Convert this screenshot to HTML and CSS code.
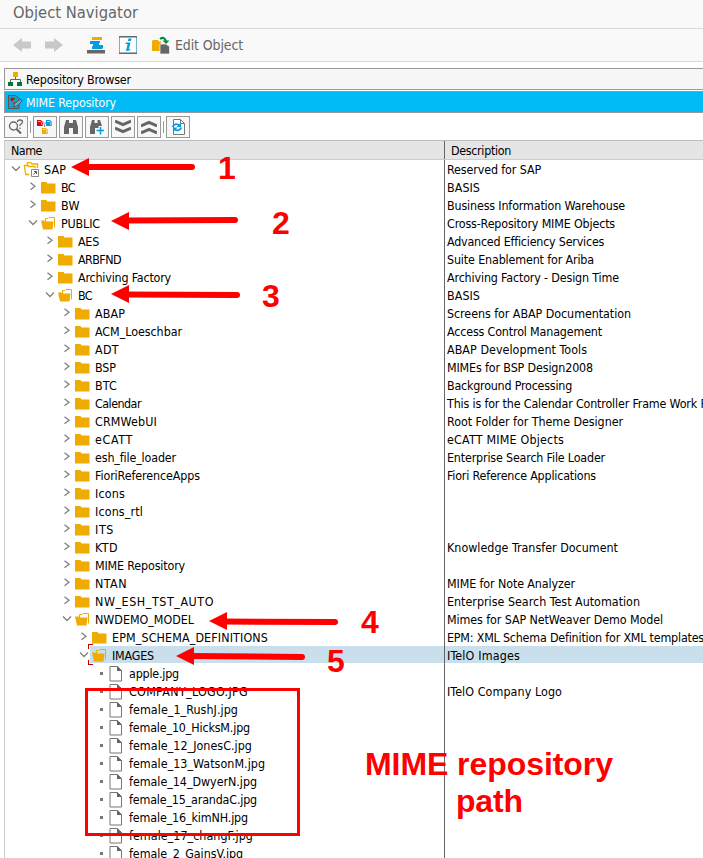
FILE: index.html
```html
<!DOCTYPE html>
<html lang="en">
<head>
<meta charset="utf-8">
<title>Object Navigator</title>
<link rel="stylesheet" href="styles.css">
</head>
<body>
<svg width="0" height="0" class="defs">
  <symbol id="folder" viewBox="0 0 16 16"><path d="M1 2h5.500l1 1.500H15.500V13.500H1z" fill="#f0ab00"/></symbol>
  <symbol id="open" viewBox="0 0 16 16"><path d="M5.500 6V2.500h2.500l1-1h5.500v10" fill="none" stroke="#f0ab00"/><path d="M1 4.500h3.500l.500 1h8.500L12.500 13.500H3z" fill="#f0ab00"/></symbol>
  <symbol id="root" viewBox="0 0 16 16"><path d="M4.500 3.500V.700h3.500l1 1.300h5.500v4M4 12.500H2.800L1.300 3.500h3.700l1 1H12v1.500M2.500 12.500h4" fill="none" stroke="#f0ab00" stroke-width="1.300"/><path d="M8.500 7.500h7v7h-7z" fill="#fff" stroke="#888"/><path d="M10.500 12.500l3-3M11 9.500h2.500V12" fill="none" stroke="#555"/></symbol>
  <symbol id="file" viewBox="0 0 14 16"><path d="M1 .500h7.500l4 4v10.500H1z" fill="#fff" stroke="#777"/><path d="M8 0l5 5H8z" fill="#666"/></symbol>
  <symbol id="right" viewBox="0 0 8 10"><path d="M1.500 .700L6 4.200 1.500 7.700" fill="none" stroke="#808080" stroke-width="1.300"/></symbol>
  <symbol id="down" viewBox="0 0 10 8"><path d="M1 1.500l4 4 4-4" fill="none" stroke="#808080" stroke-width="1.300"/></symbol>
</svg>
<main class="app">
  <header class="title"><span data-w="125">Object Navigator</span></header>
  <nav class="toolbar">
    <svg class="t-back" width="18" height="14" viewBox="0 0 18 14"><path d="M0 7l9-7v3.500h9v7H9V14z" fill="#c8c8c8"/></svg>
    <svg class="t-next" width="18" height="14" viewBox="0 0 18 14"><path d="M18 7L9 0v3.500H0v7h9V14z" fill="#c8c8c8"/></svg>
    <svg class="t-stack" width="18" height="18" viewBox="0 0 18 18"><path d="M5 1h10v3H5z" fill="#f0ab00"/><path d="M3 5h10v1.500l-1 .500v2h4v3l-1 1H5v-2.500l1-.500V8H3z" fill="#009de0"/><path d="M0 14h18v3.500H0z" fill="#666"/></svg>
    <svg class="t-info" width="18" height="18" viewBox="0 0 18 18"><path d="M.500.500h17v17H.500z" fill="#fff" stroke="#72b4d4"/><path d="M0 0h18v1.500H0zM0 16.500h18V18H0z" fill="#666"/><path d="M9.500 2.500h3l-.600 2.500h-3zM7 6.500h4.500L9.800 13.500l1.700-.800-.500 1.500-4 1L8.600 8H6.500z" fill="#009de0"/></svg>
    <svg class="t-edit" width="18" height="18" viewBox="0 0 18 18"><path d="M0 5l1-1h5l1 1.500h2v9.500H0z" fill="#f0ab00"/><path d="M8 8h6l3.500 2.500V18H8z" fill="#666" stroke="#f9f9f9" stroke-width=".7"/><path d="M8 3q4-3 6 2" fill="none" stroke="#008a3b" stroke-width="2"/><path d="M10.500 4.500h7l-3.500 3.500z" fill="#008a3b"/></svg>
    <span data-w="68">Edit Object</span>
  </nav>
  <section class="browser">
    <div class="tab"><svg width="16" height="16" viewBox="0 0 16 16"><path d="M5 1h5v5H5z" fill="#f0ab00"/><path d="M7.500 6v3M2.500 11V8.500h10V11" stroke="#666" fill="none"/><path d="M0 11h5v4H0zm9 0h5v4H9z" fill="#007833"/></svg><span data-w="105">Repository Browser</span></div>
    <div class="tab active"><svg width="16" height="16" viewBox="0 0 16 16"><path d="M.500 14.500V1.500h7.500l3 3v10z" fill="#1d9fca" stroke="#555"/><path d="M2 5l3-2 1 2-2 3zM5 9l2-1v3z" fill="#e00016"/><path d="M4 4l3 0v2z" fill="#007833"/><path d="M5 13l2-4 6-4 1 2-5 5z" fill="#4db9dc" stroke="#555"/></svg><span data-w="90">MIME Repository</span></div>
    <div class="buttons" id="buttons"></div>
    <div class="heading"><div><span data-w="31">Name</span></div><div><span data-w="60">Description</span></div></div>
    <div class="tree" id="tree"></div>
  </section>
  <svg class="notes" width="703" height="858" viewBox="0 0 703 858">
    <g fill="none" stroke="#f00" stroke-width="6" stroke-linecap="round"><path d="M85 167H192M125 220.500L235 220M125 294.500L237 295M223 621.500L335 622M189 656L302 657"/></g>
    <g fill="#f00"><path d="M71 167l18-9v18zM111 221l18-9v18zM111 294l18-9v18zM209 621l18-9v18zM176 656l18-9v18z"/></g>
    <path d="M86.500 689.500h212v145h-212z" fill="none" stroke="#f00" stroke-width="3"/>
    <g class="digits"><text x="218" y="179">1</text><text x="272" y="234">2</text><text x="262" y="307">3</text><text x="361" y="633">4</text><text x="327" y="672">5</text></g>
    <g class="caption"><text x="365" y="775" textLength="248">MIME repository</text><text x="456" y="812" textLength="67">path</text></g>
  </svg>
</main>
<script src="app.js"></script>
</body>
</html>
```
FILE: styles.css
```css
* { box-sizing: border-box; }
body { margin: 0; background: #fff; font: 12.4px/18px "DejaVu Sans Condensed", "DejaVu Sans", sans-serif; font-stretch: condensed; color: #000; }
.defs { position: absolute; }
.app { position: relative; width: 703px; height: 858px; overflow: hidden; }
span { white-space: pre; }
.title { height: 29px; padding: 3px 0 0 13px; background: #f9f9f9; border-bottom: 1px solid #d9d9d9; font-size: 16.4px; line-height: 20px; color: #666; }
.toolbar { height: 33px; background: #f9f9f9; border-bottom: 1px solid #d9d9d9; display: flex; align-items: center; padding-left: 13px; font-size: 14px; color: #666; }
.toolbar svg { flex: none; }
.toolbar span { margin-top: -1px; }
.t-next { margin-left: 14px; }
.t-stack { margin-left: 24px; }
.t-info { margin-left: 14px; }
.t-edit { margin: 0 5px 0 15px; }
.browser { margin: 6px 0 0 4px; }
.tab { height: 22px; border: 1px solid #999; border-right: 0; background: #f7f7f7; display: flex; align-items: center; gap: 2px; padding-left: 3px; }
.tab span { padding-top: 1px; }
.tab.active { margin-top: 1px; background: #00bbf5; color: #fff; }
.buttons { display: flex; align-items: flex-start; height: 24px; margin-top: 3px; }
.btn { width: 24px; height: 22px; border: 1px solid #999; background: #f7f7f7; display: flex; align-items: center; justify-content: center; margin-right: 2px; }
.sep { width: 1px; height: 12px; background: #999; margin: 5px 2px 0 0; }
.heading { height: 20px; display: grid; grid-template-columns: 440px 1fr; background: #e5e5e5; border-top: 1px solid #bbb; border-bottom: 1px solid #ccc; border-left: 1px solid #ccc; line-height: 20px; }
.heading div { padding-left: 6px; border-right: 1px solid #666; height: 18px; }
.heading div + div { border: 0; }
.tree { border-left: 1px solid #ccc; height: 702px; }
.row { height: 18px; display: grid; grid-template-columns: 440px 258px; line-height: 20px; }
.name { display: flex; border-right: 1px solid #666; min-width: 0; height: 18px; }
.desc { padding-left: 2px; overflow: hidden; height: 18px; }
.mark { width: 12px; flex: none; display: flex; justify-content: center; align-items: center; }
.dot { width: 3px; height: 3px; background: #777; }
.fill { display: flex; flex: 1; height: 17px; }
.icon { flex: none; width: 16px; height: 16px; margin: 2px 5px 0 1px; }
.selected .fill, .selected .desc { background: #c9dfeb; height: 17px; }
.selected .fill { position: relative; }
.corner { position: absolute; left: -2px; top: -2px; width: 5px; height: 5px; border: solid #b00; border-width: 1px 0 0 1px; }
.corner.low { top: 14px; border-width: 0 0 1px 1px; }
.notes { position: absolute; left: 0; top: 0; }
.notes text { font-family: "Liberation Sans", Arial, sans-serif; font-weight: bold; fill: #f00; }
.digits, .caption { font-size: 32px; }
```
FILE: app.js
```js
const rows = [
  [0, 'root', 'SAP', 22, 'Reserved for SAP', 94],
  [1, 'folder', 'BC', 14, 'BASIS', 33],
  [1, 'folder', 'BW', 19, 'Business Information Warehouse', 178],
  [1, 'open', 'PUBLIC', 39, 'Cross-Repository MIME Objects', 168],
  [2, 'folder', 'AES', 21, 'Advanced Efficiency Services', 157],
  [2, 'folder', 'ARBFND', 43, 'Suite Enablement for Ariba', 147],
  [2, 'folder', 'Archiving Factory', 93, 'Archiving Factory - Design Time', 172],
  [2, 'open', 'BC', 14, 'BASIS', 33],
  [3, 'folder', 'ABAP', 30, 'Screens for ABAP Documentation', 184],
  [3, 'folder', 'ACM_Loeschbar', 87, 'Access Control Management', 155],
  [3, 'folder', 'ADT', 24, 'ABAP Development Tools', 140],
  [3, 'folder', 'BSP', 21, 'MIMEs for BSP Design2008', 146],
  [3, 'folder', 'BTC', 22, 'Background Processing', 125],
  [3, 'folder', 'Calendar', 46, 'This is for the Calendar Controller Frame Work P', 260],
  [3, 'folder', 'CRMWebUI', 62, 'Root Folder for Theme Designer', 176],
  [3, 'folder', 'eCATT', 38, 'eCATT MIME Objects', 117],
  [3, 'folder', 'esh_file_loader', 81, 'Enterprise Search File Loader', 158],
  [3, 'folder', 'FioriReferenceApps', 105, 'Fiori Reference Applications', 149],
  [3, 'folder', 'Icons', 30, '', 0],
  [3, 'folder', 'Icons_rtl', 48, '', 0],
  [3, 'folder', 'ITS', 19, '', 0],
  [3, 'folder', 'KTD', 23, 'Knowledge Transfer Document', 171],
  [3, 'folder', 'MIME Repository', 90, '', 0],
  [3, 'folder', 'NTAN', 32, 'MIME for Note Analyzer', 128],
  [3, 'folder', 'NW_ESH_TST_AUTO', 119, 'Enterprise Search Test Automation', 193],
  [3, 'open', 'NWDEMO_MODEL', 99, 'Mimes for SAP NetWeaver Demo Model', 216],
  [4, 'folder', 'EPM_SCHEMA_DEFINITIONS', 156, 'EPM: XML Schema Definition for XML templates', 257],
  [4, 'open', 'IMAGES', 42, 'ITelO Images', 73],
  [5, 'file', 'apple.jpg', 50, '', 0],
  [5, 'file', 'COMPANY_LOGO.JPG', 119, 'ITelO Company Logo', 115],
  [5, 'file', 'female_1_RushJ.jpg', 109, '', 0],
  [5, 'file', 'female_10_HicksM.jpg', 121, '', 0],
  [5, 'file', 'female_12_JonesC.jpg', 123, '', 0],
  [5, 'file', 'female_13_WatsonM.jpg', 136, '', 0],
  [5, 'file', 'female_14_DwyerN.jpg', 128, '', 0],
  [5, 'file', 'female_15_arandaC.jpg', 128, '', 0],
  [5, 'file', 'female_16_kimNH.jpg', 119, '', 0],
  [5, 'file', 'female_17_changF.jpg', 124, '', 0],
  [5, 'file', 'female_2_GainsV.jpg', 114, '', 0]
];
const use = (id, cls, w, h) => `<svg class="${cls}" width="${w}" height="${h}"><use href="#${id}"/></svg>`;
document.getElementById('tree').innerHTML = rows.map(([level, kind, name, w, desc, dw]) => {
  const mark = kind === 'file' ? '<i class="dot"></i>' : kind === 'folder' ? use('right', '', 8, 10) : use('down', '', 10, 8);
  const selected = name === 'IMAGES';
  return `<div class="row${selected ? ' selected' : ''}"><div class="name" style="padding-left:${5 + level * 17}px"><div class="mark">${mark}</div><div class="fill">${selected ? '<i class="corner"></i><i class="corner low"></i>' : ''}${use(kind, 'icon', 16, 16)}<span data-w="${w}">${name}</span></div></div><div class="desc"><span data-w="${dw}">${desc}</span></div></div>`;
}).join('');

const icons = [
  '<circle cx="5.500" cy="7" r="4" fill="none" stroke="#666" stroke-width="1.300"/><path d="M8.500 10l4.500 4.500" stroke="#666" stroke-width="2"/><path d="M9.500 3q0-2 2.500-2t2.500 2q0 1-1.500 2t-1 2M12 8.500v1.500" fill="none" stroke="#666" stroke-width="1.300"/>',
  null,
  '<path d="M.600 1.600h3l1.500 1.500v3.400H.600z" fill="#fff" stroke="#d0021b" stroke-width="1.200"/><path d="M1 3h3v3H1z" fill="#e00016"/><path d="M9.600 1.600h3l1.500 1.500v3.400H9.600z" fill="#fff" stroke="#009de0" stroke-width="1.200"/><path d="M10 3h3v3h-3z" fill="#009de0"/><path d="M5.600 9.600h3l1.500 1.500v3.400H5.600z" fill="#fff" stroke="#f0ab00" stroke-width="1.200"/><path d="M6 11h3v3H6z" fill="#f0ab00"/><path d="M6 4h3M7.500 5v3" stroke="#999"/>',
  '<path d="M3 1h3v3h4V1h3l2 7v7h-5V9H6v6H1V8z" fill="#666"/>',
  '<path d="M3 1h2.500v3h3V1H11l2 6H9.500v2H6v6H1V8z" fill="#666"/><path d="M7.500 11.500H15M11.500 8v7.500" stroke="#009de0" stroke-width="1.500"/>',
  '<path d="M0 2l8 3.500L16 2M0 9l8 3.500L16 9" fill="none" stroke="#666" stroke-width="3"/>',
  '<path d="M0 7l8-3.500L16 7M0 14l8-3.500L16 14" fill="none" stroke="#666" stroke-width="3"/>',
  null,
  '<path d="M3.500.500h7l4 4v11h-11z" fill="#fff" stroke="#777"/><path d="M10.500.500v4h4" fill="none" stroke="#777"/><path d="M2.500 8q3-5 7-1.500M11.500 8.500q-3 5-7 1.500" fill="none" stroke="#009de0" stroke-width="1.700"/><path d="M11 3.500V8H6.500zM3 13V8.500h4.500z" fill="#009de0"/>'
];
document.getElementById('buttons').innerHTML = icons.map(i => i ? `<div class="btn"><svg width="16" height="16" viewBox="0 0 16 16">${i}</svg></div>` : '<i class="sep"></i>').join('');

document.querySelectorAll('[data-w]').forEach(el => {
  const n = el.textContent.length;
  if (n > 1) el.style.letterSpacing = (el.dataset.w - el.getBoundingClientRect().width) / n + 'px';
});
```
